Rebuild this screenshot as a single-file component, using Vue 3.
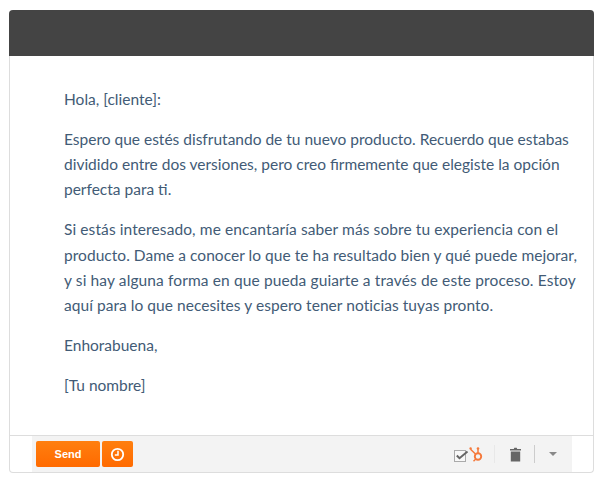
<template>
  <div class="card">
    <div class="head"></div>
    <div class="body">
      <p v-for="(para, i) in paragraphs" :key="i">
        <span
          v-for="line in para"
          :key="line.text"
          class="line"
          :style="{ letterSpacing: (line.extra || 0) + 'px' }"
          >{{ line.text }}</span
        >
      </p>
    </div>
    <div class="foot">
      <div class="bar">
        <button class="btn send">Send</button>
        <button class="btn clock">
          <svg width="15" height="15" viewBox="0 0 15 15">
            <circle cx="7.5" cy="7.5" r="5.7" fill="none" stroke="#fff" stroke-width="1.8" />
            <path d="M8 3.8V8H4.8" fill="none" stroke="#fff" stroke-width="1.5" />
          </svg>
        </button>
        <div class="tools">
          <svg class="check" width="15" height="15" viewBox="0 0 15 15">
            <rect x="0.5" y="3.5" width="11" height="11" fill="#f8f8f8" stroke="#aaa" />
            <path d="M2.8 8.5L5.5 11.2L13.5 4.5" fill="none" stroke="#666" stroke-width="2" />
          </svg>
          <svg class="hub" width="15" height="17" viewBox="0 0 15 17">
            <circle cx="9" cy="10.5" r="3.2" fill="none" stroke="#f5793b" stroke-width="1.9" />
            <path d="M9 7V3.2M6.5 8L1.5 3.2M6.8 13L4.5 15.2" fill="none" stroke="#f5793b" stroke-width="1.5" />
            <circle cx="1.6" cy="2.4" r="1.2" fill="#f5793b" />
            <circle cx="9" cy="2.6" r="1.3" fill="#f5793b" />
          </svg>
          <span class="sep first"></span>
          <svg class="trash" width="11" height="15" viewBox="0 0 11 15">
            <path d="M0 2H3.8L4.3 0.8H6.7L7.2 2H11V3.4H0ZM0.8 4.4H10.2V14.6H0.8Z" fill="#666" />
          </svg>
          <span class="sep second"></span>
          <span class="caret"></span>
        </div>
      </div>
    </div>
  </div>
</template>

<script setup>
const paragraphs = [
  [{ text: 'Hola, [cliente]:' }],
  [
    { text: 'Espero que estés disfrutando de tu nuevo producto. Recuerdo que estabas' },
    { text: 'dividido entre dos versiones, pero creo firmemente que elegiste la opción' },
    { text: 'perfecta para ti.' },
  ],
  [
    { text: 'Si estás interesado, me encantaría saber más sobre tu experiencia con el', extra: 0.1 },
    { text: 'producto. Dame a conocer lo que te ha resultado bien y qué puede mejorar,', extra: 0.04 },
    { text: 'y si hay alguna forma en que pueda guiarte a través de este proceso. Estoy', extra: 0.12 },
    { text: 'aquí para lo que necesites y espero tener noticias tuyas pronto.', extra: 0.05 },
  ],
  [{ text: 'Enhorabuena,' }],
  [{ text: '[Tu nombre]' }],
]
</script>

<style>
html,
body {
  background: #fff;
}
</style>

<style scoped>
.card {
  box-sizing: border-box;
  width: 585px;
  height: 463px;
  margin: 10px 0 0 9px;
  display: flex;
  flex-direction: column;
  border: 1px solid #ddd;
  border-top: 0;
  border-radius: 4px;
}
.head {
  height: 46px;
  margin: 0 -1px;
  background: #444;
  border-radius: 4px 4px 0 0;
}
.body {
  flex: 1;
  padding: 31px 14px 0 54px;
  font-family: Lato, sans-serif;
  font-size: 15.5px;
  line-height: 25.2px;
  color: #425b76;
}
.body p {
  margin: 0 0 14.8px;
}
.line {
  display: block;
  white-space: nowrap;
}
.foot {
  height: 36px;
  border-top: 1px solid #ddd;
  padding-left: 22px;
}
.bar {
  width: 540px;
  height: 36px;
  box-sizing: border-box;
  padding: 5px 0 0 4px;
  display: flex;
  align-items: flex-start;
  gap: 2px;
  background: #f3f3f3;
}
.btn {
  height: 26px;
  padding: 0;
  border: 0;
  border-radius: 2px;
  background: linear-gradient(#ff7f0f, #ff6a00);
  color: #fff;
  display: flex;
  align-items: center;
  justify-content: center;
}
.send {
  width: 64px;
  font-family: "Liberation Sans", Arial, sans-serif;
  font-size: 11px;
  font-weight: 700;
}
.clock {
  width: 31px;
}
.tools {
  margin-left: auto;
  height: 26px;
  display: flex;
  align-items: center;
}
.sep {
  width: 1px;
  height: 18px;
  background: #ddd;
}
.sep.first {
  margin: 0 15px 0 10px;
  background: #e8e8e8;
}
.sep.second {
  margin: 0 14px 0 13px;
  background: #ccc;
}
.caret {
  width: 0;
  height: 0;
  margin-right: 15px;
  border-left: 4px solid transparent;
  border-right: 4px solid transparent;
  border-top: 4px solid #888;
}
</style>
